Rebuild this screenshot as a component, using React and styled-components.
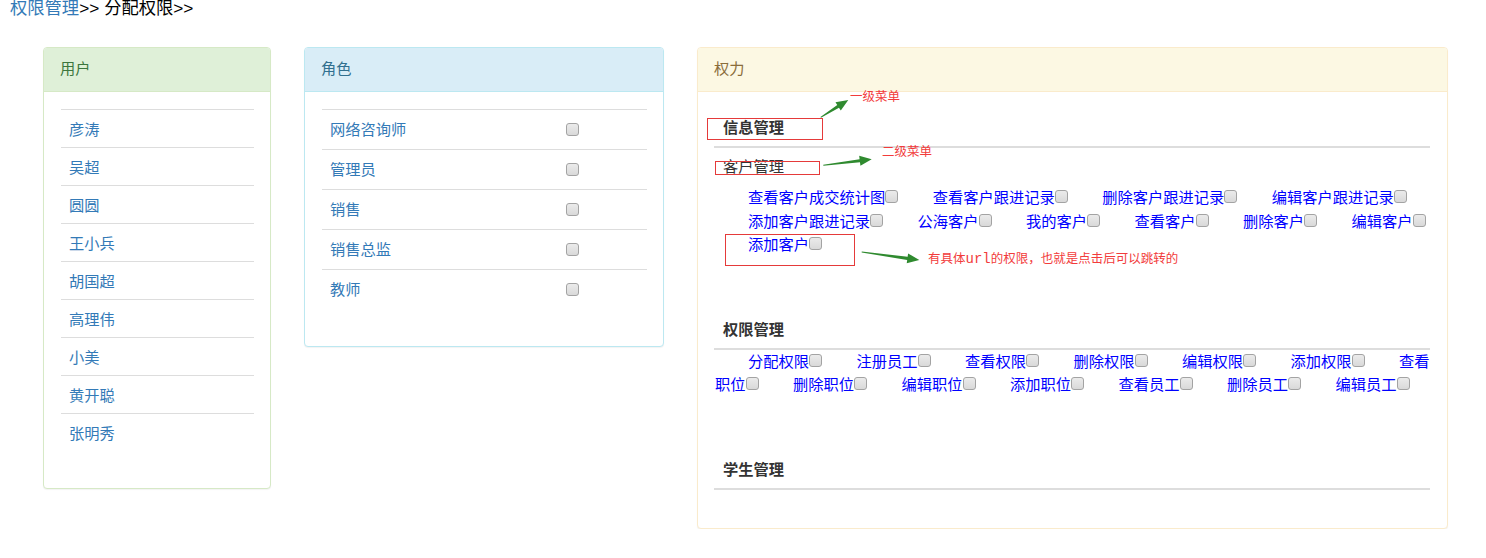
import React from 'react';
import styled, { createGlobalStyle, css } from 'styled-components';

const GlobalStyle = createGlobalStyle`
  body {
    margin: 0;
    background: #fff;
    font-family: "Liberation Sans", "Noto Sans CJK SC", sans-serif;
    color: #333;
  }
`;

const panelColors = {
  success: { bg: '#dff0d8', border: '#d6e9c6', text: '#3c763d' },
  info: { bg: '#d9edf7', border: '#bce8f1', text: '#31708f' },
  warning: { bg: '#fcf8e3', border: '#faebcc', text: '#8a6d3b' },
};

const Breadcrumb = styled.div`
  height: 16px;
  line-height: 16px;
  font-size: 17.3px;
  padding-left: 10px;
  color: #000;
  white-space: nowrap;
`;

const Crumb = styled.a`
  color: #337ab7;
  text-decoration: none;
`;

const Row = styled.div`
  display: flex;
  align-items: flex-start;
  gap: 33px;
  padding-left: 43px;
  margin-top: 31px;
`;

const Panel = styled.div`
  position: relative;
  box-sizing: border-box;
  width: ${({ width }) => width}px;
  background: #fff;
  border: 1px solid ${({ variant }) => panelColors[variant].border};
  border-radius: 4px;
  box-shadow: 0 1px 1px rgba(0, 0, 0, 0.05);
`;

const PanelHeading = styled.div`
  box-sizing: border-box;
  height: 44px;
  display: flex;
  align-items: center;
  padding: 0 16px 5px;
  font-size: 15.25px;
  border-radius: 3px 3px 0 0;
  ${({ variant }) => css`
    background: ${panelColors[variant].bg};
    color: ${panelColors[variant].text};
    border-bottom: 1px solid ${panelColors[variant].border};
  `}
`;

const ListBody = styled.div`
  padding: 17px 16px 17px 17px;
`;

const Table = styled.div`
  margin-bottom: 20px;
`;

const UserRow = styled.div`
  box-sizing: border-box;
  height: 38px;
  display: flex;
  align-items: center;
  padding: 0 8px 2px;
  border-top: 1px solid #ddd;
  font-size: 15.25px;
  color: #337ab7;
`;

const RoleRow = styled.div`
  height: 39px;
  display: grid;
  grid-template-columns: 1fr 81px;
  align-items: center;
  border-top: 1px solid #ddd;
  font-size: 15.25px;
  color: #337ab7;
  padding-left: 8px;
`;

const RoleName = styled.span`
  padding-bottom: 4px;
`;

const Check = styled.input.attrs({ type: 'checkbox' })`
  appearance: none;
  -webkit-appearance: none;
  box-sizing: border-box;
  width: 13px;
  height: 13px;
  margin: 0;
  border: 1px solid #a3a3a3;
  border-radius: 3px;
  background: linear-gradient(#ebebeb, #d9d9d9);
`;

const RoleCheck = styled(Check)`
  display: block;
  margin-bottom: 1px;
`;

const PermCheck = styled(Check)`
  display: inline-block;
  vertical-align: baseline;
  margin-right: 1.5px;
`;

const PowerBody = styled.div`
  padding: 0 17px 38px 16px;
`;

const Section = styled.div`
  padding-top: 26px;
`;

const SectionTitle = styled.div`
  font-size: 15.25px;
  line-height: 20px;
  font-weight: bold;
  padding-left: 9px;
  margin-bottom: 8px;
  color: #333;
`;

const Rule = styled.div`
  height: 2px;
  background: #ddd;
`;

const SubTitle = styled.div`
  font-size: 15.25px;
  line-height: 20px;
  padding-left: 9px;
  margin-top: 9px;
  color: #333;
`;

const PermList = styled.div`
  margin-top: ${({ spaced }) => (spaced ? 9 : 0)}px;
  margin-bottom: 37px;
  padding-left: 1px;
  font-size: 15.25px;
  line-height: 23.5px;
`;

const Perm = styled.span`
  margin-left: 33px;
  color: #0000ff;
`;

const Mark = styled.div`
  position: absolute;
  left: ${({ x }) => x}px;
  top: ${({ y }) => y}px;
  width: ${({ w }) => w}px;
  height: ${({ h }) => h}px;
  box-sizing: border-box;
  border: 1px solid #e53a3a;
`;

const Note = styled.div`
  position: absolute;
  left: ${({ x }) => x}px;
  top: ${({ y }) => y}px;
  font-size: 12.5px;
  line-height: 14px;
  color: #f23b3b;
  white-space: nowrap;
`;

const Mono = styled.span`
  font-family: "Liberation Mono", monospace;
  font-size: 14px;
`;

const ArrowLayer = styled.svg`
  position: absolute;
  left: 0;
  top: 0;
  width: 100%;
  height: 100%;
  pointer-events: none;
  overflow: visible;
`;

const users = ['彦涛', '吴超', '圆圆', '王小兵', '胡国超', '高理伟', '小美', '黄开聪', '张明秀'];
const roles = ['网络咨询师', '管理员', '销售', '销售总监', '教师'];
const infoPerms = ['查看客户成交统计图', '查看客户跟进记录', '删除客户跟进记录', '编辑客户跟进记录', '添加客户跟进记录', '公海客户', '我的客户', '查看客户', '删除客户', '编辑客户', '添加客户'];
const authPerms = ['分配权限', '注册员工', '查看权限', '删除权限', '编辑权限', '添加权限', '查看职位', '删除职位', '编辑职位', '添加职位', '查看员工', '删除员工', '编辑员工'];

// tapered green arrow, tail -> tip
const arrowPoints = (x1, y1, x2, y2) => {
  const dx = x2 - x1, dy = y2 - y1;
  const len = Math.hypot(dx, dy);
  const ux = dx / len, uy = dy / len;
  const px = -uy, py = ux;
  const bx = x2 - ux * 12, by = y2 - uy * 12;
  const p = (x, y, k) => `${x + px * k},${y + py * k}`;
  return [p(x1, y1, 0.5), p(bx, by, 1.6), p(bx, by, 5), `${x2},${y2}`, p(bx, by, -5), p(bx, by, -1.6), p(x1, y1, -0.5)].join(' ');
};

const Arrow = ({ from, to }) => (
  <polygon points={arrowPoints(from[0], from[1], to[0], to[1])} fill="#2f8a2f" />
);

const PermItems = ({ items }) =>
  items.map(p => (
    <Perm key={p}>{p}<PermCheck /></Perm>
  ));

const App = () => {
  return (
    <>
      <GlobalStyle />
      <Breadcrumb><Crumb href="#">权限管理</Crumb>&gt;&gt; 分配权限&gt;&gt;</Breadcrumb>
      <Row>
        <Panel variant="success" width={228}>
          <PanelHeading variant="success">用户</PanelHeading>
          <ListBody>
            <Table>
              {users.map(u => <UserRow key={u}>{u}</UserRow>)}
            </Table>
          </ListBody>
        </Panel>

        <Panel variant="info" width={360}>
          <PanelHeading variant="info">角色</PanelHeading>
          <ListBody>
            <Table>
              {roles.map(r => (
                <RoleRow key={r}>
                  <RoleName>{r}</RoleName>
                  <span><RoleCheck /></span>
                </RoleRow>
              ))}
            </Table>
          </ListBody>
        </Panel>

        <Panel variant="warning" width={751}>
          <PanelHeading variant="warning">权力</PanelHeading>
          <PowerBody>
            <Section>
              <SectionTitle>信息管理</SectionTitle>
              <Rule />
              <SubTitle>客户管理</SubTitle>
              <PermList spaced><PermItems items={infoPerms} /></PermList>
            </Section>
            <Section>
              <SectionTitle>权限管理</SectionTitle>
              <Rule />
              <PermList><PermItems items={authPerms} /></PermList>
            </Section>
            <Section>
              <SectionTitle>学生管理</SectionTitle>
              <Rule />
            </Section>
          </PowerBody>

          <Mark x={9} y={70} w={116} h={22} />
          <Mark x={17} y={113} w={105} h={14} />
          <Mark x={27} y={186} w={130} h={32} />
          <Note x={152} y={42}>一级菜单</Note>
          <Note x={184} y={97}>二级菜单</Note>
          <Note x={230} y={204}>有具体<Mono>url</Mono>的权限，也就是点击后可以跳转的</Note>
          <ArrowLayer>
            <Arrow from={[122.7, 69.3]} to={[150.3, 52]} />
            <Arrow from={[125.3, 117.3]} to={[173.7, 111.3]} />
            <Arrow from={[163.7, 204]} to={[221.3, 212]} />
          </ArrowLayer>
        </Panel>
      </Row>
    </>
  );
};

export default App;
